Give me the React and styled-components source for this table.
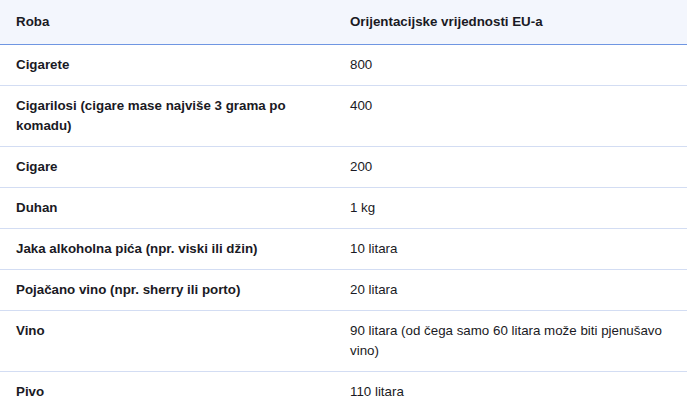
import React from 'react'
import styled, { createGlobalStyle } from 'styled-components'

const GlobalStyle = createGlobalStyle`
  body {
    margin: 0;
    background: #fff;
    font-family: "Liberation Sans", Arial, sans-serif;
  }
`

const rows = [
  ['Cigarete', '800'],
  ['Cigarilosi (cigare mase najviše 3 grama po komadu)', '400'],
  ['Cigare', '200'],
  ['Duhan', '1 kg'],
  ['Jaka alkoholna pića (npr. viski ili džin)', '10 litara'],
  ['Pojačano vino (npr. sherry ili porto)', '20 litara'],
  ['Vino', '90 litara (od čega samo 60 litara može biti pjenušavo vino)'],
  ['Pivo', '110 litara'],
]

const App = () => {
  return (
    <>
      <GlobalStyle />
      <Table>
        <colgroup>
          <col style={{ width: 334 }} />
          <col />
        </colgroup>
        <thead>
          <tr>
            <HeadCell>Roba</HeadCell>
            <HeadCell>Orijentacijske vrijednosti EU-a</HeadCell>
          </tr>
        </thead>
        <tbody>
          {rows.map(([item, value]) => (
            <tr key={item}>
              <Cell $bold>{item}</Cell>
              <Cell>{value}</Cell>
            </tr>
          ))}
        </tbody>
      </Table>
    </>
  )
}

export default App

const Table = styled.table`
width: 687px;
border-collapse: collapse;
table-layout: fixed;
font-size: 13.33px;
line-height: 20px;
color: #1a1a24;
`

const HeadCell = styled.th`
text-align: left;
font-weight: 700;
padding: 12px 16px;
background: #f3f6fd;
border-bottom: 1px solid #6f96e2;
vertical-align: top;
`

const Cell = styled.td`
padding: 10px 16px;
font-weight: ${(p) => (p.$bold ? 700 : 400)};
border-bottom: 1px solid #d3ddf3;
vertical-align: top;
`
